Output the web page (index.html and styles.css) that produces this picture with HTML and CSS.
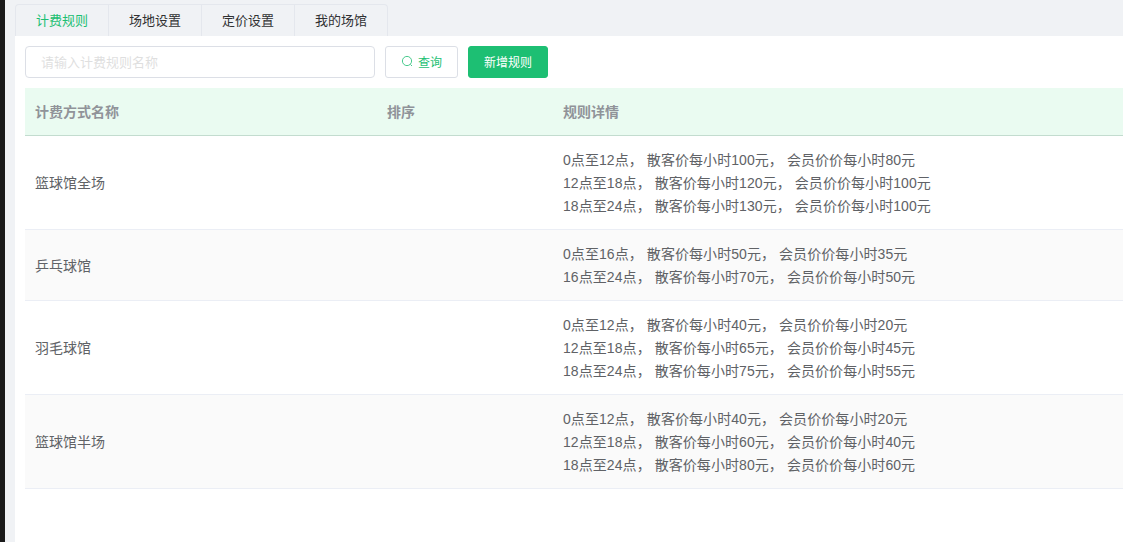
FILE: index.html
```html
<!DOCTYPE html>
<html lang="zh-CN">
<head>
<meta charset="utf-8">
<title>计费规则</title>
<link rel="stylesheet" href="styles.css">
</head>
<body>
<div class="rail"></div>
<main class="page">
  <nav class="tabs">
    <a class="tab active">计费规则</a>
    <a class="tab">场地设置</a>
    <a class="tab">定价设置</a>
    <a class="tab">我的场馆</a>
  </nav>
  <section class="panel">
    <div class="toolbar">
      <input class="search" type="text" placeholder="请输入计费规则名称">
      <button class="btn btn-plain">
        <svg class="icon" viewBox="0 0 13 13" width="13" height="13"><circle cx="6" cy="6" r="4.6"/><path d="M9.4 9.4 11 11"/></svg>
        <span>查询</span>
      </button>
      <button class="btn btn-primary">新增规则</button>
    </div>
    <table class="rules">
      <colgroup><col class="c-name"><col class="c-sort"><col></colgroup>
      <thead>
        <tr><th>计费方式名称</th><th>排序</th><th>规则详情</th></tr>
      </thead>
      <tbody>
        <tr>
          <td>篮球馆全场</td><td></td>
          <td class="detail">
            <div>0点至12点， 散客价每小时100元， 会员价价每小时80元</div>
            <div>12点至18点， 散客价每小时120元， 会员价价每小时100元</div>
            <div>18点至24点， 散客价每小时130元， 会员价价每小时100元</div>
          </td>
        </tr>
        <tr>
          <td>乒乓球馆</td><td></td>
          <td class="detail">
            <div>0点至16点， 散客价每小时50元， 会员价价每小时35元</div>
            <div>16点至24点， 散客价每小时70元， 会员价价每小时50元</div>
          </td>
        </tr>
        <tr>
          <td>羽毛球馆</td><td></td>
          <td class="detail">
            <div>0点至12点， 散客价每小时40元， 会员价价每小时20元</div>
            <div>12点至18点， 散客价每小时65元， 会员价价每小时45元</div>
            <div>18点至24点， 散客价每小时75元， 会员价价每小时55元</div>
          </td>
        </tr>
        <tr>
          <td>篮球馆半场</td><td></td>
          <td class="detail">
            <div>0点至12点， 散客价每小时40元， 会员价价每小时20元</div>
            <div>12点至18点， 散客价每小时60元， 会员价价每小时40元</div>
            <div>18点至24点， 散客价每小时80元， 会员价价每小时60元</div>
          </td>
        </tr>
      </tbody>
    </table>
  </section>
</main>
</body>
</html>
```
FILE: styles.css
```css
* { box-sizing: border-box; }
html, body { height: 100%; margin: 0; }
body {
  display: flex;
  overflow: hidden;
  background: #f0f2f5;
  font-family: "Liberation Sans", "Noto Sans CJK SC", sans-serif;
  font-size: 14px;
  color: #606266;
}
.rail { flex: 0 0 5px; background: #1a1a1a; }
.page {
  flex: 1;
  min-width: 0;
  display: flex;
  flex-direction: column;
  padding: 4px 0 0 10px;
}
.tabs {
  display: flex;
  align-self: flex-start;
  height: 32px;
  border: 1px solid #e4e7ed;
  border-bottom: 0;
  border-radius: 4px 4px 0 0;
}
.tab {
  width: 93px;
  line-height: 31px;
  text-align: center;
  font-size: 13px;
  color: #303133;
  border-left: 1px solid #e4e7ed;
}
.tab:first-child { border-left: 0; width: 92px; }
.tab.active { color: #1dbf73; }
.panel { flex: 1; background: #fff; padding: 10px 0 0 10px; }
.toolbar { display: flex; gap: 10px; height: 32px; margin-bottom: 10px; }
.search {
  width: 350px;
  height: 32px;
  padding: 0 15px;
  border: 1px solid #dcdfe6;
  border-radius: 4px;
  font: 13px "Liberation Sans", "Noto Sans CJK SC", sans-serif;
  outline: none;
}
.search::placeholder { color: #dfdfdf; opacity: 1; }
.btn {
  display: flex;
  align-items: center;
  justify-content: center;
  gap: 4px;
  height: 32px;
  padding: 0 0 2px;
  border-radius: 3px;
  font: 12px "Liberation Sans", "Noto Sans CJK SC", sans-serif;
}
.btn-plain { width: 73px; background: #fff; border: 1px solid #dcdfe6; color: #1dbf73; }
.btn-primary { width: 80px; background: #1dbf73; border: 1px solid #1dbf73; color: #fff; }
.icon { fill: none; stroke: #1dbf73; stroke-width: 1; opacity: .8; }
.rules { width: 100%; border-collapse: separate; border-spacing: 0; table-layout: fixed; }
.c-name { width: 352px; }
.c-sort { width: 176px; }
.rules th {
  height: 48px;
  padding: 0 10px 1px;
  text-align: left;
  font-weight: 700;
  color: #909399;
  background: #eafbf1;
  border-bottom: 1px solid #c3dccf;
}
.rules td {
  padding: 13px 10px 11px;
  line-height: 23px;
  border-bottom: 1px solid #ebeef5;
}
.rules .detail { letter-spacing: .07px; }
.rules tbody tr:nth-child(even) td { background: #fafafa; }
```
